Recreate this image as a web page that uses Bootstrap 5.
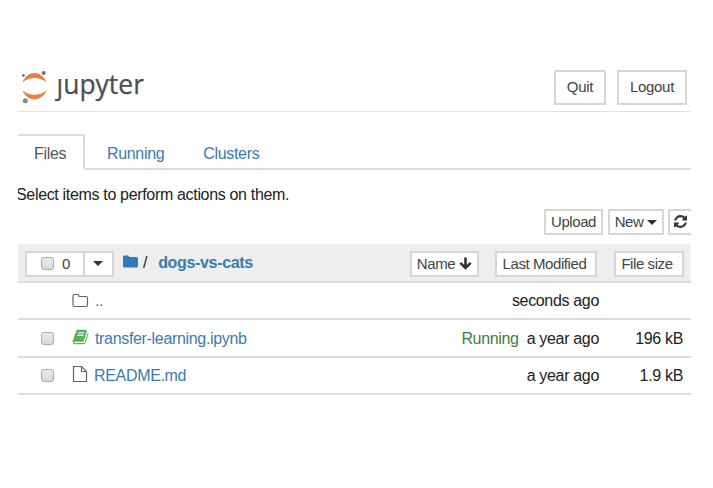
<!DOCTYPE html>
<html lang="en">
<head>
<meta charset="utf-8">
<title>Jupyter – Files</title>
<link href="https://cdn.jsdelivr.net/npm/bootstrap@5.3.0/dist/css/bootstrap.min.css" rel="stylesheet">
<style>
body{font-family:"Liberation Sans",Arial,sans-serif;font-size:16px;letter-spacing:-.33px;line-height:20px;color:#222;background:#fff}
.page{width:673px;margin-left:18px;padding-top:65px;overflow:hidden}
.page a{color:#3a7ab5;text-decoration:none}
.top{height:47px;border-bottom:1px solid #e2e2e2;padding:5px 4px 0 3px}
.btn-j{--bs-btn-color:#444;--bs-btn-bg:#fff;--bs-btn-border-color:#d6d6d6;--bs-btn-border-radius:0;--bs-btn-font-size:15px;--bs-btn-line-height:20px;--bs-btn-padding-x:0;--bs-btn-padding-y:0;border-width:2px;height:26px;white-space:nowrap;display:inline-flex;align-items:center;justify-content:center;background:#fff;letter-spacing:-.42px}
.btn-top{height:35px;letter-spacing:-.3px;padding-bottom:2px}
.w-quit{width:52px}.w-out{width:70px;margin-left:11px}.w-up{width:59px}.w-new{width:56px}.w-ref{width:29px;margin-right:-6px}
.w-name{width:69px}.w-mod{width:102px;margin-left:16px;padding-right:3px}.w-size{width:70px;margin:0 7px 0 17px;padding-right:4px}
.tabs{--bs-nav-tabs-border-width:2px;--bs-nav-tabs-border-color:#ddd;--bs-nav-tabs-border-radius:2px;margin-top:22px;height:36px}
.page .tabs .nav-link{padding:8px 0 6px;height:36px;font-size:16px;border-width:2px;color:#3a7ab5}
.page .tabs .nav-link.active{width:70px;margin-left:-3px;padding-left:17px;color:#555;border-color:#ddd #ddd #fff}
.hint{margin:15px 0 0 -2px;height:24px;white-space:nowrap}
.list-head{height:39px;background:#eee;border-bottom:2px solid #ddd;margin-top:9px;padding-top:2px}
.w-sel{width:60px;margin-left:7px;padding-left:1px}.w-drop{width:31px;margin-left:-2px;padding-right:1px}
.item{height:37.4px;border-bottom:2px solid #ddd;padding-top:1px}
.box{width:13px;height:13px;border:1px solid #aaa;border-radius:3px;background:linear-gradient(#ececec,#d8d8d8);flex:none}
.item .box{margin-left:23px;margin-right:18px}
.ico{width:17px;height:18px;flex:none}
.tri{border:5px solid transparent;border-top-color:#333;border-bottom:0}
.run{color:#3c803e;margin-right:8px}
.size{width:92px;padding-right:8px}
</style>
<script src="https://cdn.jsdelivr.net/npm/bootstrap@5.3.0/dist/js/bootstrap.bundle.min.js"></script>
</head>
<body>
<div class="page">
  <header class="top d-flex">
    <svg width="126" height="40" viewBox="21 70 126 40" class="me-auto" role="img" aria-label="jupyter">
      <path d="M22.600 82.500C27 69.700 42 69.700 46.500 82.500C40 76.500 29 76.500 22.600 82.500z" fill="#ea7e3c"/>
      <path d="M22.600 90.300C27 102.500 42 102.500 46.500 90.300C40 96.300 29 96.300 22.600 90.300z" fill="#ea7e3c"/>
      <circle cx="43.700" cy="73" r="2" fill="#6e6e6e"/><circle cx="23.400" cy="75.500" r="1.400" fill="#777"/><circle cx="25.300" cy="100.800" r="2.500" fill="#888"/>
      <text x="56.500" y="93.500" letter-spacing="0" font-family="Open Sans,Noto Sans,sans-serif" font-size="26.500" textLength="87.500" lengthAdjust="spacingAndGlyphs" fill="#4e4e4e" stroke="#4e4e4e" stroke-width=".25">ȷupyter</text>
    </svg>
    <button class="btn btn-j btn-top w-quit">Quit</button>
    <button class="btn btn-j btn-top w-out">Logout</button>
  </header>
  <ul class="nav nav-tabs tabs flex-nowrap">
    <li class="nav-item"><a class="nav-link active" href="#">Files</a></li>
    <li class="nav-item" style="margin-left:20px"><a class="nav-link" href="#">Running</a></li>
    <li class="nav-item" style="margin-left:35px"><a class="nav-link" href="#">Clusters</a></li>
  </ul>
  <div class="hint">Select items to perform actions on them.</div>
  <div class="d-flex justify-content-end">
    <button class="btn btn-j w-up">Upload</button>
    <button class="btn btn-j w-new" style="margin-left:5px">New<span class="tri ms-1"></span></button>
    <button class="btn btn-j w-ref ms-1" aria-label="Refresh"><svg width="13" height="13" viewBox="0 0 1536 1536" fill="#333" style="margin:-2px 4px 0 0"><path d="M1511 928q0 5-1 7-64 268-268 434.500t-478 166.500q-146 0-282.500-55t-243.500-157l-129 129q-19 19-45 19t-45-19-19-45v-448q0-26 19-45t45-19h448q26 0 45 19t19 45-19 45l-137 137q71 66 161 102t187 36q134 0 250-65t186-179q11-17 53-117 8-23 30-23h192q13 0 22.500 9.500t9.500 22.500zm25-800v448q0 26-19 45t-45 19h-448q-26 0-45-19t-19-45 19-45l138-138q-148-137-349-137-134 0-250 65t-186 179q-11 17-53 117-8 23-30 23h-199q-13 0-22.500-9.500t-9.500-22.500v-7q65-268 270-434.500t480-166.500q146 0 284 55.500t245 156.500l130-129q19-19 45-19t45 19 19 45z"/></svg></button>
  </div>
  <div class="list-head d-flex align-items-center">
    <div class="btn-j btn w-sel"><span class="box me-2"></span><span>0</span></div>
    <button class="btn btn-j w-drop" aria-label="Select"><span class="tri"></span></button>
    <a href="#" aria-label="Home" class="d-flex" style="margin:-5px 5px 0 9px"><svg width="15" height="13" viewBox="0 0 15 13"><path d="M0 1.500Q0 .5 1 .5H5Q6 .5 6 1.500V2H13.500Q15 2 15 3.500V11Q15 12.500 13.500 12.500H1.500Q0 12.500 0 11z" fill="#337ab7"/></svg></a>
    <span style="margin-top:-1px">/</span>
    <a href="#" class="fw-bold me-auto" style="margin:-1px 0 0 11px">dogs-vs-cats</a>
    <button class="btn btn-j w-name">Name<svg class="ms-1" width="13" height="13" viewBox="0 0 13 13" fill="none" stroke="#333" stroke-width="2.600"><path d="M6.500 .5V11M1.300 5.800L6.500 11L11.700 5.800"/></svg></button>
    <button class="btn btn-j w-mod">Last Modified</button>
    <button class="btn btn-j w-size">File size</button>
  </div>
  <div class="item d-flex align-items-center">
    <span class="box invisible"></span>
    <svg class="ico" viewBox="0 0 17 18"><path d="M1 4Q1 2.500 2.500 2.500H5.500Q7 2.500 7 4V4.500H14Q15.500 4.500 15.500 6V13Q15.500 14.500 14 14.500H2.500Q1 14.500 1 13z" fill="none" stroke="#666" stroke-width="1.200"/></svg>
    <a href="#" style="margin-left:6px">..</a>
    <span class="ms-auto">seconds ago</span><span class="size text-end"></span>
  </div>
  <div class="item d-flex align-items-center">
    <span class="box"></span>
    <svg class="ico" viewBox="-60 0 1792 1792" fill="#53b257" style="margin-top:-3px"><path d="M1639 478q40 57 18 129l-275 906q-19 64-76.500 107.500t-122.500 43.500h-923q-77 0-148.500-53.500t-99.500-131.500q-24-67-2-127 0-4 3-27t4-37q1-8-3-21.500t-3-19.500q2-11 8-21t16.500-23.500 16.500-23.500q23-38 45-91.500t30-91.500q3-10 .5-30t-.5-28q3-11 17-28t17-23q21-36 42-92t25-90q1-9-2.500-32t.5-28q4-13 22-30.500t22-22.500q19-26 42.500-84.500t27.500-96.500q1-8-3-25.500t-2-26.500q2-8 9-18t18-23 17-21q8-12 16.500-30.500t15-35 16-36 19.500-32 26.500-23.500 36-11.500 47.500 5.500l-1 3q38-9 51-9h761q74 0 114 56t18 130l-274 906q-36 119-71.500 153.500t-128.500 34.500h-869q-27 0-38 15-11 16-1 43 24 70 144 70h923q29 0 56-15.500t35-41.500l300-987q7-22 5-57 38 15 59 43zm-1064 2q-4 13 2 22.500t20 9.500h608q13 0 25.500-9.500t16.500-22.500l21-64q4-13-2-22.500t-20-9.500h-608q-13 0-25.500 9.500t-16.500 22.500zm-83 256q-4 13 2 22.500t20 9.500h608q13 0 25.500-9.500t16.500-22.500l21-64q4-13-2-22.500t-20-9.500h-608q-13 0-25.500 9.500t-16.500 22.500z"/></svg>
    <a href="#" style="margin-left:6px">transfer-learning.ipynb</a>
    <span class="ms-auto run">Running</span><span>a year ago</span><span class="size text-end">196 kB</span>
  </div>
  <div class="item d-flex align-items-center">
    <span class="box"></span>
    <svg class="ico" viewBox="0 0 17 18" style="margin-top:-4px"><path d="M1.500 1.500H9.500L14.500 6.500V16.500H1.500zM9.500 1.500V6.500H14.500" fill="none" stroke="#666" stroke-width="1.200"/></svg>
    <a href="#" style="margin-left:5px">README.md</a>
    <span class="ms-auto">a year ago</span><span class="size text-end">1.9 kB</span>
  </div>
</div>
</body>
</html>
